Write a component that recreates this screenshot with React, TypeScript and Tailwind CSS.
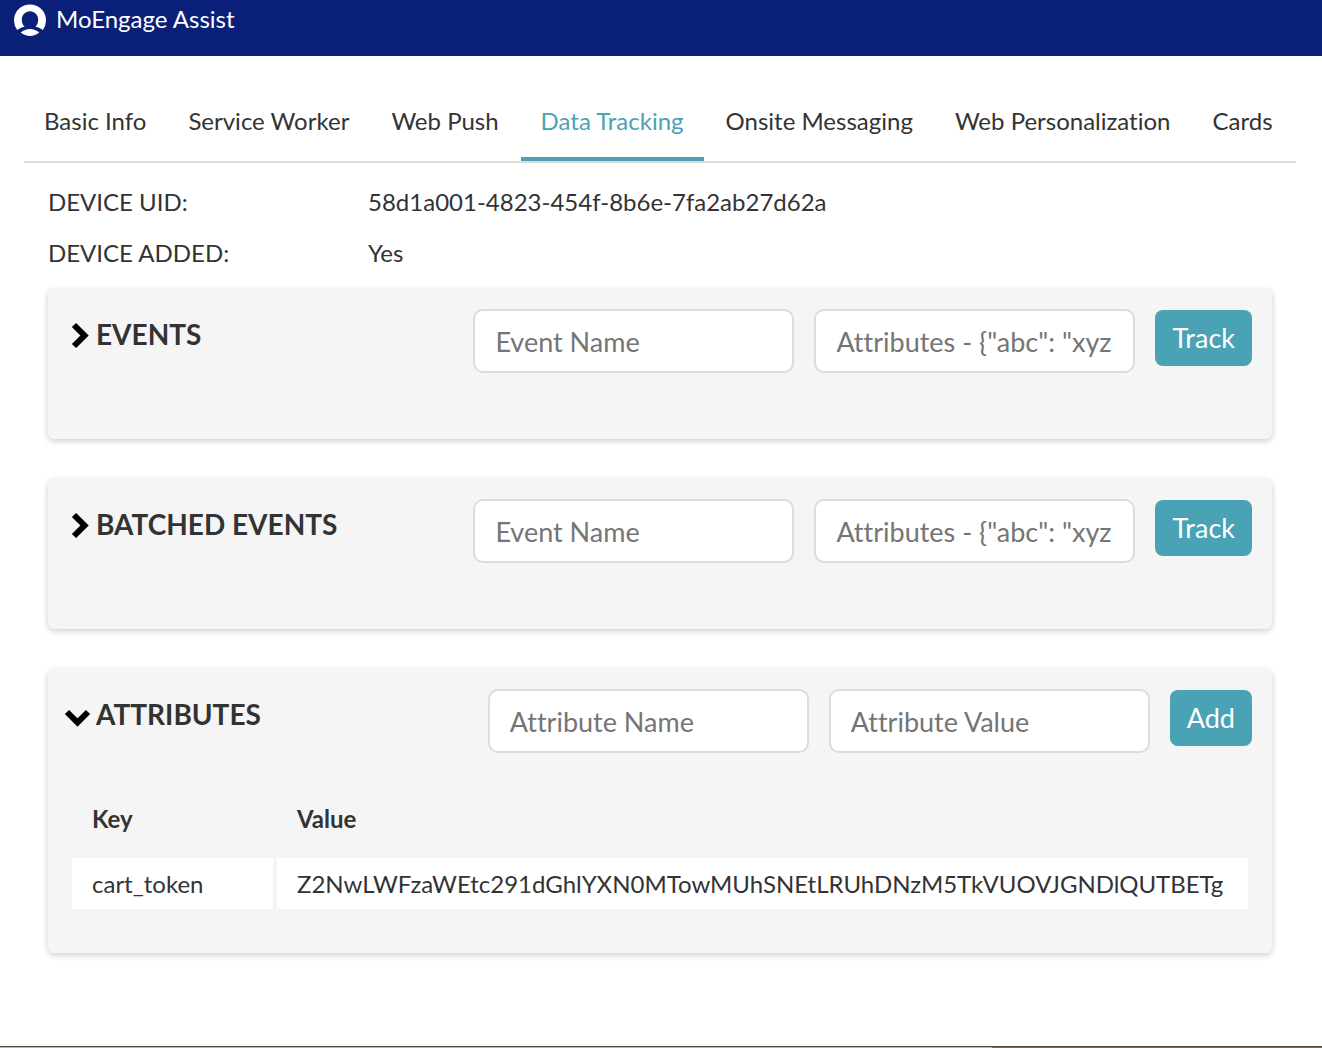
import type { ReactNode } from 'react'
import clsx from 'clsx'

const TABS = [
  'Basic Info',
  'Service Worker',
  'Web Push',
  'Data Tracking',
  'Onsite Messaging',
  'Web Personalization',
  'Cards'
]

const deviceInfo = [
  { label: 'DEVICE UID:', value: '58d1a001-4823-454f-8b6e-7fa2ab27d62a' },
  { label: 'DEVICE ADDED:', value: 'Yes' }
]

const attributes = [{ key: 'cart_token', value: 'Z2NwLWFzaWEtc291dGhlYXN0MTowMUhSNEtLRUhDNzM5TkVUOVJGNDlQUTBETg' }]

const Logo = () => (
  <svg viewBox="0 0 32 32" className="size-8 flex-none" aria-hidden="true">
    <path
      fill="#fff"
      d="M3.2 26A16 16 0 1 1 28.8 26C26.8 24.6 24.4 23.4 21.4 22.8C23.4 21 24.2 18.4 24.2 15.6C24.2 10.8 20.6 7.2 16 7.2S7.8 10.8 7.8 15.6C7.8 18.4 8.6 21 10.6 22.8C7.6 23.4 5.2 24.6 3.2 26Z"
    />
    <path fill="#fff" d="M6.7 28.6C9.4 26.2 12.6 25 16 25S22.6 26.2 25.3 28.6C22.6 30.9 19.4 32 16 32S9.4 30.9 6.7 28.6Z" />
  </svg>
)

const Chevron = ({ open }: { open?: boolean }) => (
  <svg viewBox="0 0 32 32" className="size-8 flex-none" fill="none" stroke="#000" strokeWidth="6" aria-hidden="true">
    {open ? <path d="M3 14L13.5 24.5L24 14" /> : <path d="M10 7L20.5 17.5L10 28" />}
  </svg>
)

const Card = ({
  title,
  open,
  fields,
  action,
  children
}: {
  title: string
  open?: boolean
  fields: string[]
  action: string
  children?: ReactNode
}) => (
  <section className="min-h-[150px] rounded-md bg-[#f5f5f5] px-5 pt-5 pb-5 shadow-[0_2px_6px_rgba(0,0,0,0.2)]">
    <div className="flex items-start justify-between">
      <button
        type="button"
        aria-expanded={!!open}
        className="-ml-1 flex items-center py-[7px] text-[28px] leading-9 font-bold"
      >
        <Chevron open={open} />
        {title}
      </button>
      <form className="flex items-start gap-5" onSubmit={(e) => e.preventDefault()}>
        {fields.map((field) => (
          <input
            key={field}
            type="text"
            aria-label={field}
            placeholder={field}
            className="h-16 w-[321px] rounded-[10px] border-2 border-[#dcdcdc] bg-white px-5 text-[27px] placeholder:text-[#757575]"
          />
        ))}
        <button type="submit" className="mt-px h-14 rounded-lg bg-[#4aa3b4] px-[17px] text-[27px] text-white">
          {action}
        </button>
      </form>
    </div>
    {children}
  </section>
)

export const App = () => {
  return (
    <div className="flex min-h-screen flex-col bg-white font-['Lato',sans-serif] text-2xl text-[#333] [font-variant-ligatures:none]">
      <header className="flex h-14 items-start gap-[10px] bg-[#0a2078] px-[14px] pt-1 text-white">
        <Logo />
        <h1 className="leading-[30px]">MoEngage Assist</h1>
      </header>

      <main className="flex-1 pr-[26px] pb-10 pl-6">
        <nav className="mt-7 flex gap-[2px] border-b-2 border-[#dcdcdc]">
          {TABS.map((tab) => (
            <a
              key={tab}
              href="#"
              className={clsx(
                'border-b-4 px-5 pt-[21px] pb-5 whitespace-nowrap',
                tab === 'Data Tracking' ? 'border-[#4aa3b4] text-[#4aa3b4]' : 'border-transparent'
              )}
            >
              {tab}
            </a>
          ))}
        </nav>

        <div className="px-6">
          <dl className="pt-[13px] pb-[11px]">
            {deviceInfo.map(({ label, value }) => (
              <div key={label} className="flex h-[51px] items-center">
                <dt className="w-80 flex-none">{label}</dt>
                <dd>{value}</dd>
              </div>
            ))}
          </dl>

          <div className="space-y-10">
            <Card title="EVENTS" fields={['Event Name', 'Attributes - {"abc": "xyz']} action="Track" />
            <Card title="BATCHED EVENTS" fields={['Event Name', 'Attributes - {"abc": "xyz']} action="Track" />
            <Card title="ATTRIBUTES" open fields={['Attribute Name', 'Attribute Value']} action="Add">
              <table className="mt-[27px] mb-6 w-full border-separate border-spacing-x-1 border-spacing-y-0 text-left">
                <thead>
                  <tr className="h-[78px]">
                    <th className="w-[201px] px-5">Key</th>
                    <th className="px-5">Value</th>
                  </tr>
                </thead>
                <tbody>
                  {attributes.map((attr) => (
                    <tr key={attr.key} className="h-[51px] bg-white">
                      <td className="px-5">{attr.key}</td>
                      <td className="px-5">{attr.value}</td>
                    </tr>
                  ))}
                </tbody>
              </table>
            </Card>
          </div>
        </div>
      </main>

      <footer className="flex h-[2px] border-t border-[#4a4a42]">
        <div className="w-3/4 bg-[#b4b8b0]" />
        <div className="flex-1 bg-[#7a6a58]" />
      </footer>
    </div>
  )
}

export default App
